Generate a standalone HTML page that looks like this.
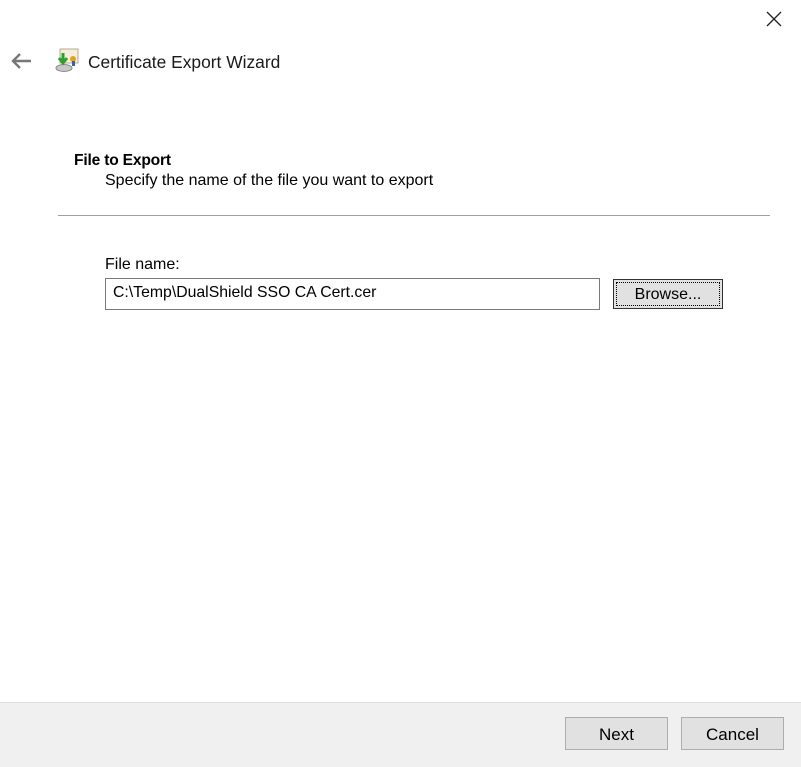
<!DOCTYPE html>
<html><head><style>
body{margin:0;width:801px;height:766px;background:#fff;font-family:"Liberation Sans",sans-serif;position:relative;overflow:hidden;color:#000}
.a{position:absolute}
.btn{position:absolute;background:#e1e1e1;border:1px solid #adadad;box-sizing:border-box;font-size:17px;text-align:center;line-height:33px}
</style></head><body>
<svg class="a" style="left:765px;top:10px" width="18" height="18"><path d="M2 2L16 16M16 2L2 16" stroke="#222" stroke-width="1.3"/></svg>
<svg class="a" style="left:11px;top:52px" width="22" height="18"><path d="M2 9H20M9 2L2 9L9 16" stroke="#777" stroke-width="2.4" fill="none"/></svg>
<svg class="a" style="left:54px;top:47px" width="26" height="26">
<rect x="6" y="2" width="18" height="14" fill="#f4efdc" stroke="#b9a98a"/>
<circle cx="19" cy="12" r="3" fill="#e8a21a"/><rect x="18" y="14" width="3" height="5" fill="#3463b8"/>
<ellipse cx="10" cy="21" rx="8" ry="3.5" fill="#c8c8c8" stroke="#888"/>
<path d="M9 6V14M5 11L9 16L13 11" stroke="#2da02d" stroke-width="3" fill="none"/>
</svg>
<div class="a" style="left:88px;top:52px;font-size:17.4px;color:#1a1a1a">Certificate Export Wizard</div>
<div class="a" style="left:74px;top:152px;font-size:15.6px;font-weight:bold;letter-spacing:-0.2px">File to Export</div>
<div class="a" style="left:105px;top:172px;font-size:16px">Specify the name of the file you want to export</div>
<div class="a" style="left:58px;top:215px;width:712px;height:1px;background:#a0a0a0"></div>
<div class="a" style="left:105px;top:256px;font-size:16px">File name:</div>
<div class="a" style="left:105px;top:278px;width:495px;height:32px;border:1px solid #7a7a7a;box-sizing:border-box;font-size:15.8px;line-height:28px;padding-left:7px">C:\Temp\DualShield SSO CA Cert.cer</div>
<div class="btn" style="left:613px;top:279px;width:110px;height:30px;border-color:#333;line-height:30px;font-size:16px"><div style="position:absolute;inset:2px;border:1px dotted #000"></div>Browse...</div>
<div class="a" style="left:0;top:702px;width:801px;height:64px;background:#f0f0f0;border-top:1px solid #dfdfdf"></div>
<div class="btn" style="left:565px;top:717px;width:103px;height:33px">Next</div>
<div class="btn" style="left:681px;top:717px;width:103px;height:33px">Cancel</div>
</body></html>
